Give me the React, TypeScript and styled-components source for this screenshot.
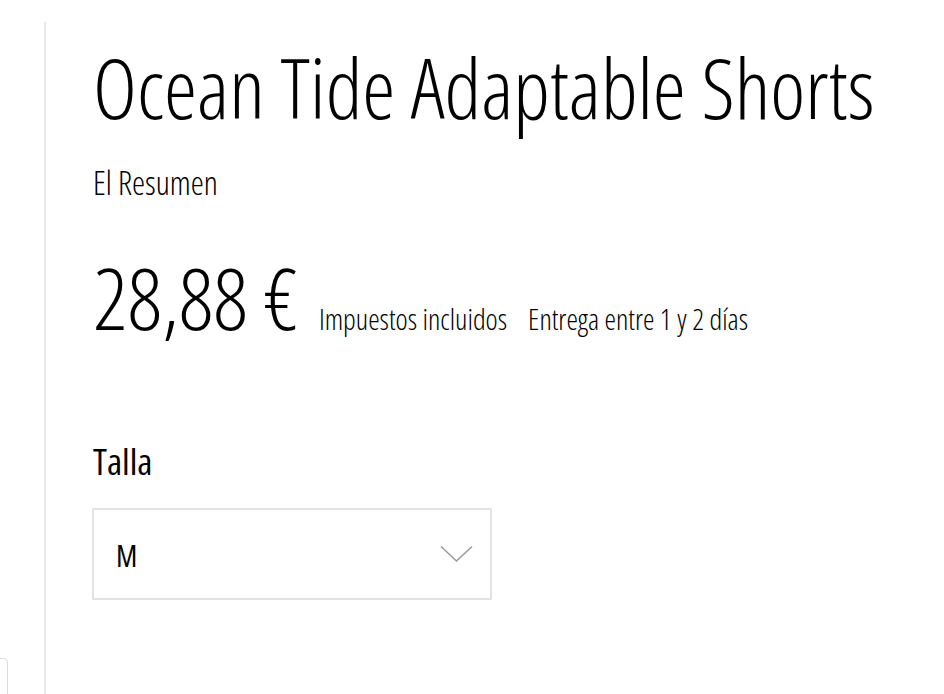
import React from "react";
import styled, { createGlobalStyle } from "styled-components";

//******** COMPONENTS ********//

const GlobalStyle = createGlobalStyle`
  html, body {
    margin: 0;
    background: #ffffff;
  }
  body {
    font-family: "Open Sans", "Liberation Sans", sans-serif;
    font-stretch: 75%;
    font-weight: 300;
    color: #000000;
    overflow: hidden;
  }
`;

const Chevron: React.FC = () => (
  <svg width="33" height="18" viewBox="0 0 33 18" fill="none">
    <path d="M1 1.5 L16.5 16 L32 1.5" stroke="#9a9a9a" strokeWidth="1.5" />
  </svg>
);

export default function App() {
  return (
    <>
      <GlobalStyle />
      <SPage>
        <SGallery>
          <SThumb />
        </SGallery>
        <SDetails>
          <STitle>Ocean Tide Adaptable Shorts</STitle>
          <SSummary>El Resumen</SSummary>
          <SPriceRow>
            <SPrice>28,88 €</SPrice>
            <SNote>Impuestos incluidos</SNote>
            <SNote>Entrega entre 1 y 2 días</SNote>
          </SPriceRow>
          <SLabel>Talla</SLabel>
          <SSelect>
            <SSelectValue>M</SSelectValue>
            <Chevron />
          </SSelect>
        </SDetails>
      </SPage>
    </>
  );
}

//******** STYLES ********//

const SPage = styled.div`
  display: flex;
  height: 694px;
`;

const SGallery = styled.div`
  width: 44px;
  flex-shrink: 0;
  overflow: hidden;
  display: flex;
  align-items: flex-end;
`;

const SThumb = styled.div`
  width: 80px;
  height: 38px;
  margin-left: -74px;
  margin-bottom: -4px;
  border: 1px solid #dcdcdc;
  border-radius: 4px;
`;

const SDetails = styled.div`
  flex: 1;
  margin-top: 22px;
  border-left: 2px solid #e8e8e8;
  padding-left: 47px;
  display: flex;
  flex-direction: column;
  align-items: flex-start;
`;

const STitle = styled.h1`
  margin: 15px 0 0;
  font-size: 83.5px;
  font-weight: 300;
  line-height: 100px;
  white-space: nowrap;
`;

const SSummary = styled.div`
  margin-top: 26px;
  font-size: 33px;
  line-height: 40px;
`;

const SPriceRow = styled.div`
  margin-top: 44px;
  display: flex;
  align-items: baseline;
  gap: 21px;
  white-space: nowrap;
`;

const SPrice = styled.span`
  font-size: 85px;
  line-height: 100px;
`;

const SNote = styled.span`
  font-size: 29px;
  line-height: 36px;
`;

const SLabel = styled.div`
  margin-top: 92px;
  font-size: 37px;
  font-weight: 500;
  line-height: 44px;
`;

const SSelect = styled.div`
  margin-top: 25px;
  box-sizing: border-box;
  width: 400px;
  height: 92px;
  border: 2px solid #e3e3e3;
  display: flex;
  align-items: center;
  justify-content: space-between;
  padding: 0 17px 0 22px;
  margin-left: -1px;
`;

const SSelectValue = styled.span`
  font-size: 30px;
  font-weight: 400;
  line-height: 34px;
  padding-top: 3px;
`;
